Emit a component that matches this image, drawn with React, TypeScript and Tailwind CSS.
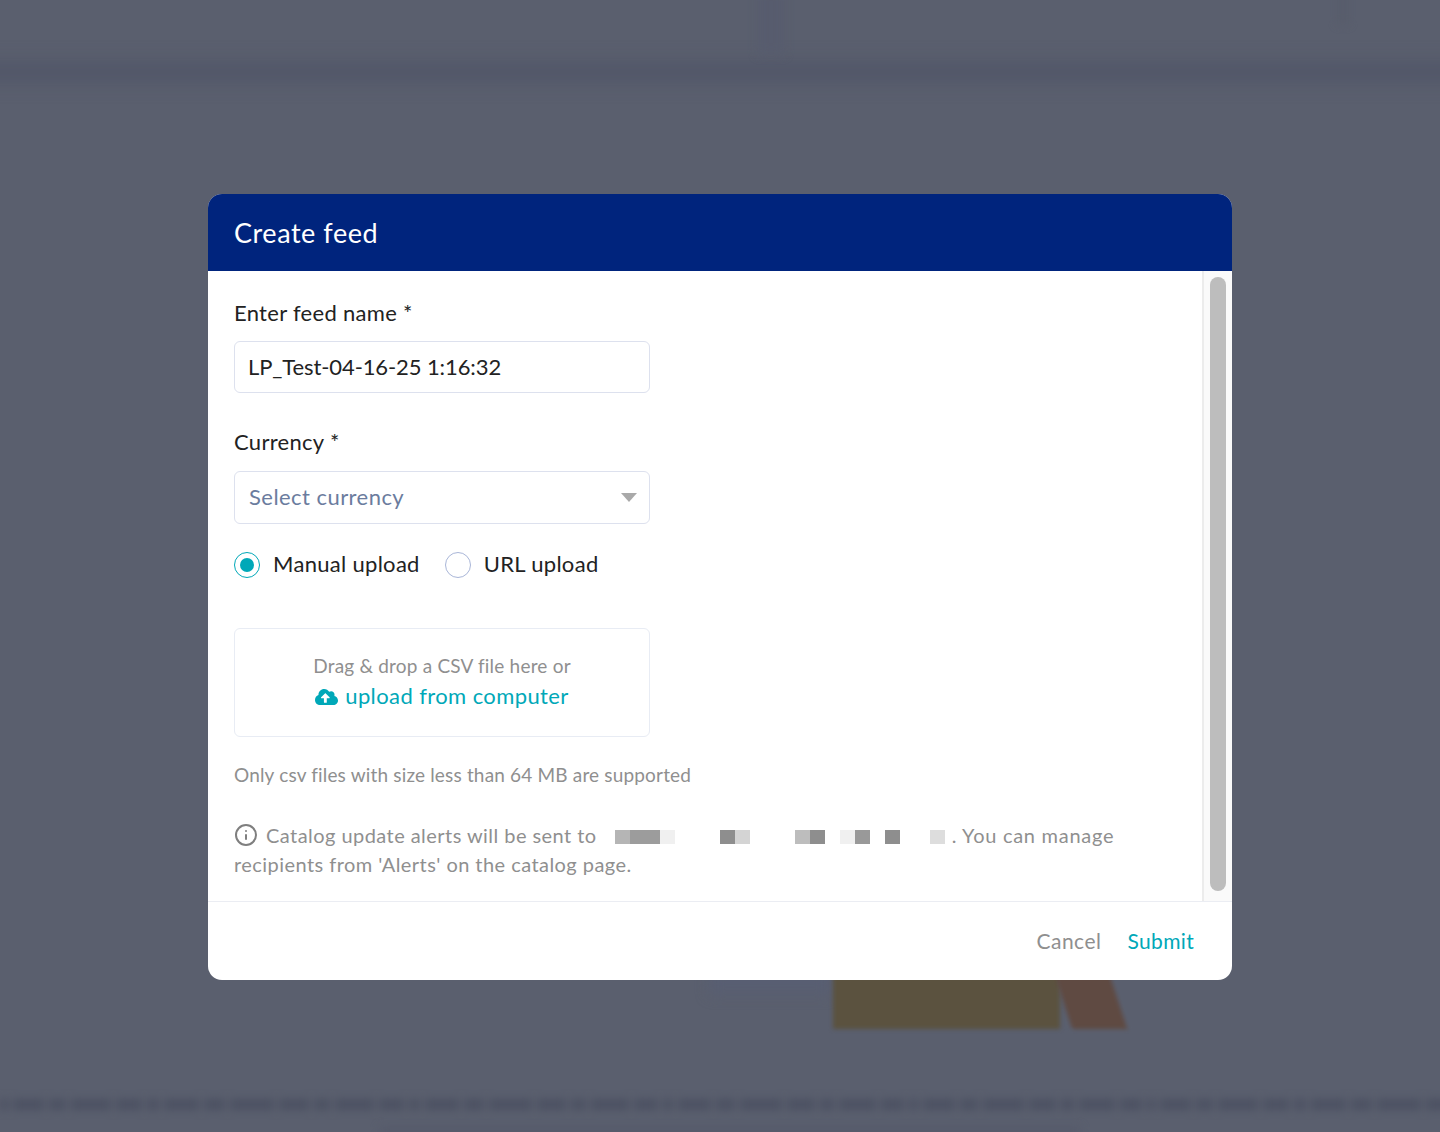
import { FaCloudUploadAlt } from 'react-icons/fa';
import { FiInfo } from 'react-icons/fi';

const redacted = [
  { width: 'w-[15px]', color: 'bg-[#b5b5b5]' },
  { width: 'w-[30px]', color: 'bg-[#9c9c9c]' },
  { width: 'w-[15px]', color: 'bg-[#f0f0f0]' },
  { width: 'w-[45px]', color: 'bg-transparent' },
  { width: 'w-[15px]', color: 'bg-[#8e8e8e]' },
  { width: 'w-[15px]', color: 'bg-[#d4d4d4]' },
  { width: 'w-[45px]', color: 'bg-transparent' },
  { width: 'w-[15px]', color: 'bg-[#bdbdbd]' },
  { width: 'w-[15px]', color: 'bg-[#8e8e8e]' },
  { width: 'w-[15px]', color: 'bg-transparent' },
  { width: 'w-[15px]', color: 'bg-[#f0f0f0]' },
  { width: 'w-[15px]', color: 'bg-[#999999]' },
  { width: 'w-[15px]', color: 'bg-transparent' },
  { width: 'w-[15px]', color: 'bg-[#8e8e8e]' },
  { width: 'w-[30px]', color: 'bg-transparent' },
  { width: 'w-[15px]', color: 'bg-[#dddddd]' },
];

// blurred page behind the modal
function Backdrop() {
  const words = Array.from({ length: 90 }, (_, i) => 8 + ((i * 23) % 37));
  return (
    <div className="absolute inset-0 overflow-hidden bg-[#5a5f6e]">
      <div className="absolute -left-[30px] -right-[30px] top-[62px] h-[20px] bg-[#515668] blur-[9px]"></div>
      <div className="absolute left-[758px] -top-[10px] h-[64px] w-[26px] bg-[#575c6e] blur-[5px]"></div>
      <div className="absolute left-[1338px] -top-[10px] h-[34px] w-[10px] bg-[#575c6b] blur-[4px]"></div>
      <div className="absolute left-[710px] top-[960px] h-[34px] w-[120px] bg-[#585e72] blur-[7px]"></div>
      <div className="absolute left-[833px] top-[960px] h-[69px] w-[227px] bg-[#5b523f] blur-[2px]"></div>
      <div className="absolute left-[1061px] top-[960px] h-[69px] w-[55px] skew-x-[18deg] bg-[#5f4a42] blur-[2px]"></div>
      <div className="absolute left-0 top-[1099px] flex gap-[5px] blur-[4px]">
        {words.map((w, i) => (
          <div key={i} className="h-[11px] shrink-0 bg-[#4c5162]" style={{ width: w }}></div>
        ))}
      </div>
      <div className="absolute left-[380px] top-[1127px] h-[8px] w-[700px] bg-[#555a6a] blur-[4px]"></div>
    </div>
  );
}

export default function App() {
  return (
    <div className="relative h-[1132px] w-full overflow-hidden font-['Lato',sans-serif]">
      <Backdrop />

      <div className="relative z-10 mx-auto mt-[194px] w-[1024px] overflow-hidden rounded-[14px] bg-white">
        <div className="flex h-[77px] items-center bg-[#00247d] px-[26px] text-[27px] leading-[32px] tracking-[0.55px] text-white">
          Create feed
        </div>

        <div className="flex h-[631px] border-b border-[#ebedf3]">
          <div className="flex-1 px-[26px] pt-[30px]">
            <div className="text-[22px] leading-[24px] tracking-[0.3px] text-[#222222]">Enter feed name *</div>
            <div className="mt-[16px] flex h-[52px] w-[416px] items-center rounded-[6px] border border-[#dde1ee] px-[13px] pb-[1px] text-[22px] tracking-[-0.1px] text-[#222222]">
              LP_Test-04-16-25 1:16:32
            </div>

            <div className="mt-[37px] text-[22px] leading-[24px] tracking-[0.3px] text-[#222222]">Currency *</div>
            <div className="mt-[17px] flex h-[53px] w-[416px] items-center justify-between rounded-[6px] border border-[#dde1ee] pl-[14px] pr-[12px] text-[22px] tracking-[0.45px] text-[#6b7c9e]">
              <span className="pb-[2px]">Select currency</span>
              <svg width="16" height="9" viewBox="0 0 16 9" className="fill-[#a9a9a9]">
                <polygon points="0,0 16,0 8,9" />
              </svg>
            </div>

            <div className="mt-[28px] flex h-[26px] items-center text-[22px] tracking-[0.3px] text-[#222222]">
              <span className="flex h-[26px] w-[26px] items-center justify-center rounded-full border border-[#00a8b8]">
                <span className="h-[14px] w-[14px] rounded-full bg-[#00a8b8]"></span>
              </span>
              <span className="ml-[13px] pb-[3px]">Manual upload</span>
              <span className="ml-[25px] h-[26px] w-[26px] rounded-full border border-[#a9b6d8]"></span>
              <span className="ml-[13px] pb-[3px]">URL upload</span>
            </div>

            <div className="mt-[50px] flex h-[109px] w-[416px] flex-col items-center rounded-[6px] border border-[#e8ecf4] pt-[23px]">
              <div className="text-[19px] leading-[28px] tracking-[0.2px] text-[#8f8f8f]">Drag &amp; drop a CSV file here or</div>
              <div className="mt-[2px] flex items-center gap-[7px] text-[22px] leading-[28px] tracking-[0.4px] text-[#00a8b8]">
                <FaCloudUploadAlt className="h-[22px] w-[23px] translate-y-[1px]" />
                <span>upload from computer</span>
              </div>
            </div>

            <div className="mt-[26px] text-[19px] leading-[24px] tracking-[0.17px] text-[#8f8f8f]">
              Only csv files with size less than 64 MB are supported
            </div>

            <div className="mt-[34px] text-[20px] leading-[29px] tracking-[0.45px] text-[#8f8f8f]">
              <div className="flex items-center">
                <FiInfo className="mr-[8px] h-[24px] w-[24px] -translate-y-[1px] text-[#7f7f7f]" />
                <span>Catalog update alerts will be sent to</span>
                <span className="ml-[18px] mr-[7px] inline-flex h-[14px] translate-y-[1px]">
                  {redacted.map((b, i) => (
                    <span key={i} className={`h-full ${b.width} ${b.color}`}></span>
                  ))}
                </span>
                <span className="tracking-[0.72px]">. You can manage</span>
              </div>
              <div>recipients from 'Alerts' on the catalog page.</div>
            </div>
          </div>

          <div className="w-[30px] border-l-2 border-[#ececec] bg-[#fafafa] pb-[10px] pl-[6px] pt-[6px]">
            <div className="h-full w-[16px] rounded-full bg-[#bdbdbd]"></div>
          </div>
        </div>

        <div className="flex h-[78px] items-center justify-end gap-[26px] pr-[38px] text-[21px]">
          <span className="tracking-[0.5px] text-[#8f8f8f]">Cancel</span>
          <span className="tracking-[0.33px] text-[#00a8b8]">Submit</span>
        </div>
      </div>
    </div>
  );
}
